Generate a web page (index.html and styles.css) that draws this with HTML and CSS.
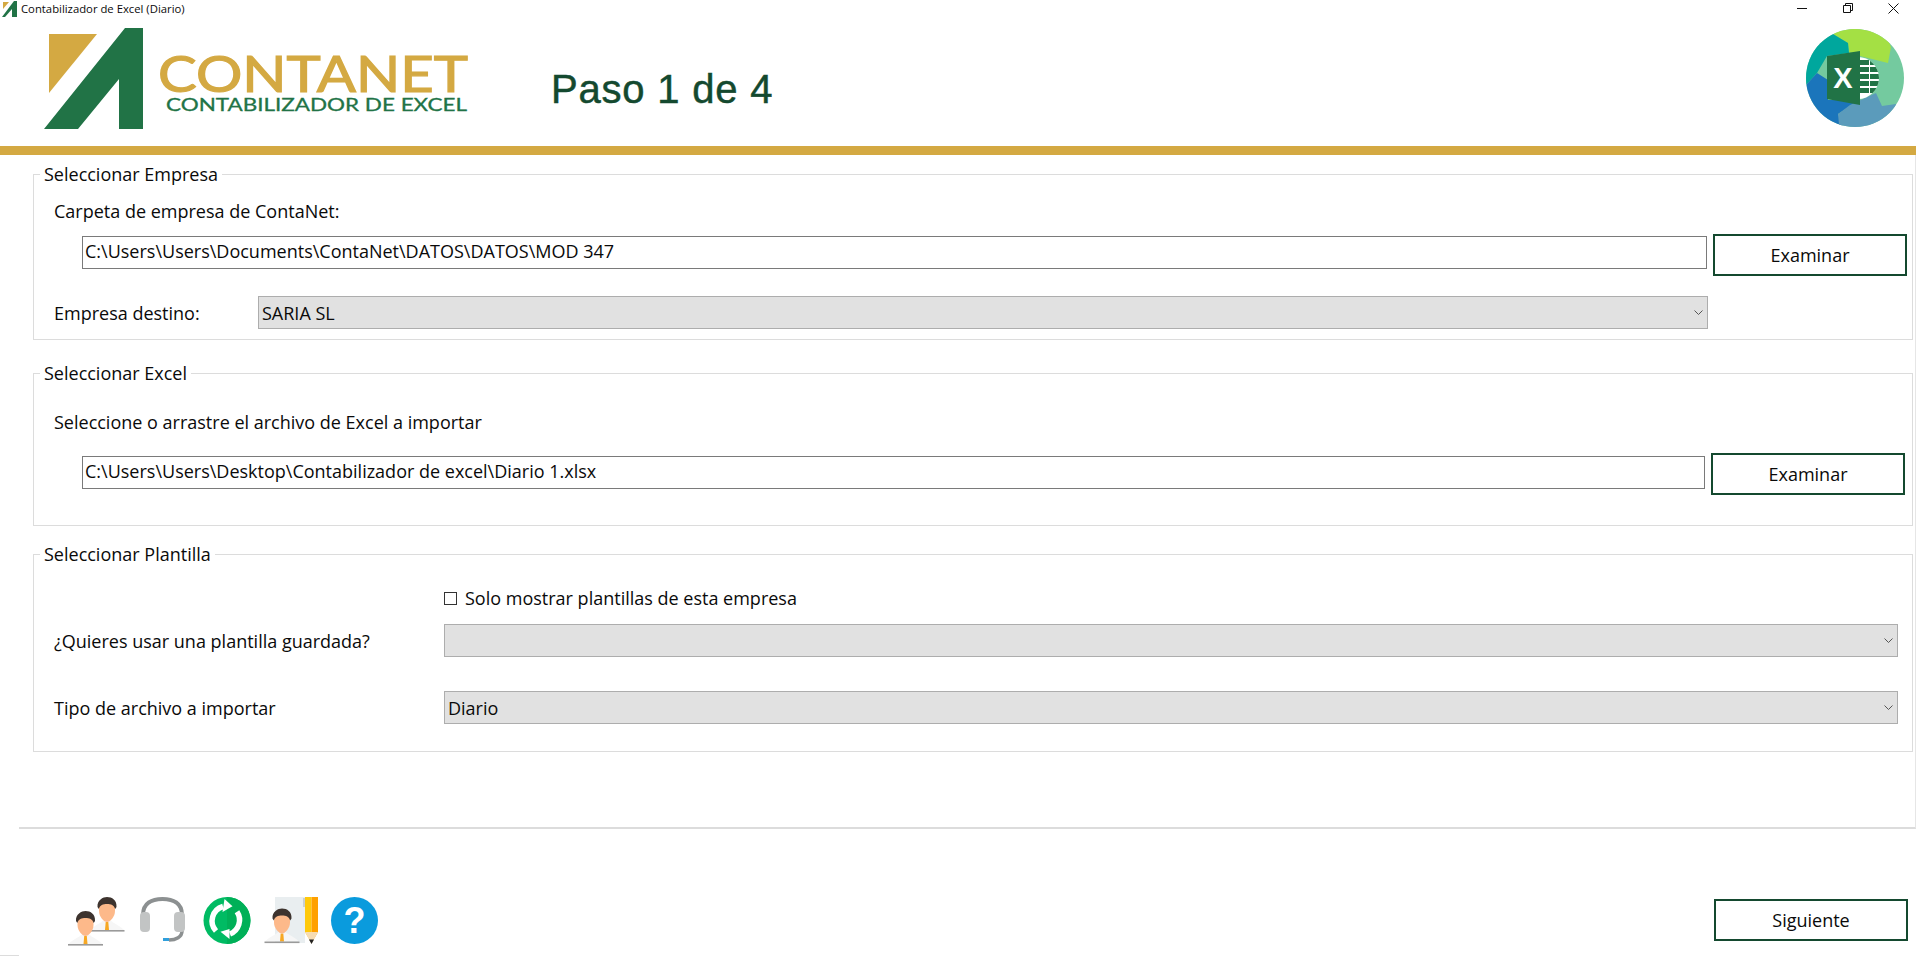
FILE: index.html
```html
<!DOCTYPE html>
<html lang="es">
<head>
<meta charset="utf-8">
<title>Contabilizador de Excel (Diario)</title>
<link rel="stylesheet" href="styles.css">
</head>
<body>
<svg class="defs" width="0" height="0" aria-hidden="true">
  <defs>
    <g id="person">
      <path d="M-17 33C-12 28-6 26-3 23L3 23C6 26 12 28 17 33Z" fill="#f6f6f6"/>
      <path d="M-1.300 25L1.300 25L2 33L-2 33Z" fill="#f7a823"/>
      <path d="M-8 8C-4 6 4 6 8 8L8 14C8 20 3 25 0 25C-3 25-8 20-8 14Z" fill="#fdb98a"/>
      <path d="M-9.500 10C-10 3-4 0 0 0C5 0 10 3 9.500 10L8.200 12C7 8 4 7 0 7C-4 7-7 8-8.200 12Z" fill="#3d332e"/>
      <rect x="-17.500" y="33" width="35" height="1.600" fill="#9a9a9a"/>
    </g>
    <clipPath id="disc"><circle cx="65" cy="58" r="49"/></clipPath>
    <clipPath id="hole"><circle cx="68" cy="58" r="21"/></clipPath>
  </defs>
</svg>

<div class="titlebar">
  <svg class="app-icon" width="15" height="16" viewBox="0 0 15 16">
    <path d="M1 1L7 1L1 8Z" fill="#d4a942"/>
    <path d="M0 16L3 16L10 8L10 16L15 16L15 0L12 0Z" fill="#217346"/>
  </svg>
  <span class="app-title">Contabilizador de Excel (Diario)</span>
  <div class="win-controls">
    <span class="win-btn"><svg width="10" height="10" viewBox="0 0 10 10"><path d="M0 5.500H10" stroke="#111" fill="none"/></svg></span>
    <span class="win-btn"><svg width="10" height="10" viewBox="0 0 10 10"><path d="M.5 2.500H7.500V9.500H.5ZM2.500 2.500V.5H9.500V7.500H7.500" stroke="#111" fill="none"/></svg></span>
    <span class="win-btn"><svg width="11" height="11" viewBox="0 0 11 11"><path d="M.5.5L10.500 10.500M10.500.5L.5 10.500" stroke="#111" fill="none"/></svg></span>
  </div>
</div>

<header class="header">
  <svg class="logo" width="440" height="126" viewBox="0 0 440 126">
    <path d="M9 14L57 14L9 73Z" fill="#d4a942"/>
    <path d="M4 109L38 109L79 59L79 109L103 109L103 8L85 8Z" fill="#217346"/>
    <text class="logo-main" x="118" y="72" textLength="310" lengthAdjust="spacingAndGlyphs">CONTANET</text>
    <text class="logo-sub" x="126" y="91" textLength="301" lengthAdjust="spacingAndGlyphs">CONTABILIZADOR DE EXCEL</text>
  </svg>
  <h1 class="step">Paso 1 de 4</h1>
  <svg class="excel" width="126" height="115" viewBox="0 0 126 115">
    <g clip-path="url(#disc)">
      <rect width="126" height="115" fill="#74ca9f"/>
      <path d="M43 14L58 23L59 32L70 36L98 43L101 27L90 0L50 0Z" fill="#a4e044"/>
      <path d="M43 14L58 23L59 33L37 36L27 53L16 65L0 60L10 10Z" fill="#00a79d"/>
      <path d="M16 65L27 53L38 60L38 80L70 80L48 94L53 107L30 115L5 90Z" fill="#1b75bb"/>
      <path d="M48 94L60 85L86 73L92 86L106 84L100 115L50 115Z" fill="#5b9bbb"/>
    </g>
    <circle cx="68" cy="58" r="21" fill="#fff"/>
    <g clip-path="url(#hole)" fill="#217346">
      <rect x="70" y="40" width="9" height="5"/><rect x="80" y="40" width="9" height="5"/>
      <rect x="70" y="47" width="9" height="5"/><rect x="80" y="47" width="9" height="5"/>
      <rect x="70" y="54" width="9" height="5"/><rect x="80" y="54" width="9" height="5"/>
      <rect x="70" y="61" width="9" height="5"/><rect x="80" y="61" width="9" height="5"/>
      <rect x="70" y="68" width="9" height="5"/><rect x="80" y="68" width="9" height="5"/>
    </g>
    <path d="M37 36L70 31L70 85L37 79Z" fill="#217346"/>
    <text class="excel-x" x="53" y="68">X</text>
  </svg>
</header>

<main class="panel">
  <fieldset class="group group-company">
    <legend class="group-title">Seleccionar Empresa</legend>
    <div class="label">Carpeta de empresa de ContaNet:</div>
    <div class="path-row">
      <div class="field field-company">C:\Users\Users\Documents\ContaNet\DATOS\DATOS\MOD 347</div>
      <div class="button">Examinar</div>
    </div>
    <div class="select-row">
      <div class="label label-target">Empresa destino:</div>
      <div class="select select-target"><span>SARIA SL</span><svg class="chevron" width="9" height="5" viewBox="0 0 9 5"><path d="M.5.5L4.500 4.500L8.500.5" stroke="#555" fill="none"/></svg></div>
    </div>
  </fieldset>

  <fieldset class="group group-excel">
    <legend class="group-title">Seleccionar Excel</legend>
    <div class="label">Seleccione o arrastre el archivo de Excel a importar</div>
    <div class="path-row path-row-excel">
      <div class="field field-excel">C:\Users\Users\Desktop\Contabilizador de excel\Diario 1.xlsx</div>
      <div class="button">Examinar</div>
    </div>
  </fieldset>

  <fieldset class="group group-template">
    <legend class="group-title">Seleccionar Plantilla</legend>
    <div class="check-row"><span class="checkbox"></span><span class="label">Solo mostrar plantillas de esta empresa</span></div>
    <div class="select-row select-row-first">
      <div class="label label-template">¿Quieres usar una plantilla guardada?</div>
      <div class="select select-template"><span></span><svg class="chevron" width="9" height="5" viewBox="0 0 9 5"><path d="M.5.5L4.500 4.500L8.500.5" stroke="#555" fill="none"/></svg></div>
    </div>
    <div class="select-row select-row-second">
      <div class="label label-template">Tipo de archivo a importar</div>
      <div class="select select-template"><span>Diario</span><svg class="chevron" width="9" height="5" viewBox="0 0 9 5"><path d="M.5.5L4.500 4.500L8.500.5" stroke="#555" fill="none"/></svg></div>
    </div>
  </fieldset>
</main>

<footer class="footer">
  <div class="tools">
    <svg width="64" height="49" viewBox="0 0 64 49"><use href="#person" x="39" y="0"/><use href="#person" x="17.500" y="14"/></svg>
    <svg width="63" height="49" viewBox="-8 0 63 49">
      <path d="M3 18C3 6 12 2 22.500 2C33 2 42 6 42 18" stroke="#8c9091" stroke-width="4" fill="none"/>
      <path d="M42 34C42 40 36 43 29 43" stroke="#8c9091" stroke-width="3.500" fill="none"/>
      <rect x="0" y="15" width="10" height="20" rx="4" fill="#c2c4c4"/>
      <rect x="34" y="15" width="11" height="20" rx="4" fill="#c2c4c4"/>
      <rect x="23" y="41" width="6" height="3" fill="#2f9fdc"/>
    </svg>
    <svg width="62" height="49" viewBox="0 0 62 49">
      <circle cx="32" cy="23.500" r="23.500" fill="#00bb63"/>
      <path d="M32 0A23.500 23.500 0 0 1 32 47Z" fill="#00b058"/>
      <path d="M21 34A15 15 0 0 1 28 9.500" stroke="#fff" stroke-width="5.500" fill="none"/>
      <path d="M29.500 2L37.500 9.300L27.500 15Z" fill="#fff"/>
      <path d="M42 14.700A15 15 0 0 1 35 37" stroke="#fff" stroke-width="5.500" fill="none"/>
      <path d="M34.500 32L25.500 34.700L34.500 42Z" fill="#fff"/>
    </svg>
    <svg width="68" height="49" viewBox="-6 0 68 49">
      <path d="M12 0H42V46H12Z" fill="#e9eef0"/>
      <rect x="40" y="1" width="2" height="9" fill="#c9cfd1"/>
      <path d="M42 0H48.500V46L42 35Z" fill="#ffc90a"/>
      <path d="M48.500 0H55V35L48.500 46Z" fill="#ffa000"/>
      <path d="M42 35H55L48.500 47Z" fill="#f6dcb4"/>
      <path d="M46 42.500H51L48.500 47Z" fill="#222"/>
      <use href="#person" x="19" y="11.500"/>
    </svg>
    <svg width="60" height="49" viewBox="0 0 60 49">
      <circle cx="29.500" cy="23.500" r="23.500" fill="#0a9bdd"/>
      <text class="help-mark" x="29.500" y="36">?</text>
    </svg>
  </div>
  <div class="button button-next">Siguiente</div>
</footer>
<div class="tick"></div>
</body>
</html>
```

FILE: styles.css
```css
* { box-sizing: border-box; }

html, body {
  margin: 0;
  height: 100%;
  background: #fff;
  overflow: hidden;
}

body {
  font-family: "Open Sans", "Noto Sans", sans-serif;
  font-size: 18px;
  line-height: 24px;
  color: #0a0a0a;
}

.defs { display: block; height: 0; }

.titlebar {
  display: flex;
  align-items: flex-start;
  height: 20px;
}

.app-icon { margin: 1px 0 0 2px; }

.app-title {
  margin-left: 4px;
  font-size: 11.3px;
  line-height: 18px;
}

.win-controls { display: flex; margin-left: auto; }

.win-btn {
  display: flex;
  justify-content: center;
  width: 45.5px;
  padding-top: 3px;
  line-height: 0;
}

.header {
  display: flex;
  align-items: flex-start;
  height: 135px;
  padding-left: 40px;
  border-bottom: 9px solid #d4a942;
}

.logo-main {
  font-family: Lato, sans-serif;
  font-size: 50px;
  font-weight: 400;
  fill: #d4a942;
  stroke: #d4a942;
  stroke-width: 1.2px;
}

.logo-sub {
  font-family: Lato, sans-serif;
  font-size: 18px;
  font-weight: 400;
  fill: #217346;
  stroke: #217346;
  stroke-width: 0.3px;
}

.step {
  margin: 45px 0 0 71px;
  font-family: "Liberation Sans", sans-serif;
  font-size: 40px;
  line-height: 48px;
  font-weight: 400;
  letter-spacing: 0.8px;
  -webkit-text-stroke: 0.5px #14492f;
  color: #14492f;
}

.excel { margin-left: auto; display: block; }

.excel-x {
  font-family: "Liberation Sans", sans-serif;
  font-size: 29px;
  font-weight: 700;
  text-anchor: middle;
  fill: #fff;
}

.panel {
  height: 674px;
  margin-left: 19px;
  padding: 7px 0 0 14px;
  border-right: 1px solid #e6e6e6;
  border-bottom: 2px solid #dcdcdc;
}

.group {
  width: 1880px;
  margin: 0;
  padding: 0 5px 0 20px;
  border: 1px solid #dcdcdc;
  min-width: 0;
}

.group-company { padding-top: 13px; padding-bottom: 10px; }
.group-excel { margin-top: 21px; padding-top: 25px; padding-bottom: 30px; }
.group-template { margin-top: 16px; padding-top: 20px; padding-bottom: 27px; }

.group-title {
  margin-left: -14px;
  padding: 0 4px;
  line-height: 24px;
}

.path-row {
  display: flex;
  align-items: flex-start;
  margin: 11px 0 0 28px;
}

.path-row-excel { margin-top: 19px; }

.field {
  height: 33px;
  margin-top: 2px;
  padding: 0 2px;
  border: 1px solid #7a7a7a;
  line-height: 28px;
  white-space: nowrap;
}

.field-company { width: 1625px; margin-right: 6px; }
.field-excel { width: 1623px; margin-top: 3px; margin-right: 6px; }

.button {
  display: flex;
  align-items: center;
  justify-content: center;
  width: 194px;
  height: 42px;
  border: 2px solid #14492f;
}

.select-row {
  display: flex;
  align-items: center;
  margin-top: 20px;
}

.select-row-first { margin-top: 14px; }
.select-row-second { margin-top: 34px; }

.label-target { width: 204px; }
.label-template { width: 390px; margin-top: 1px; }

.select {
  display: flex;
  align-items: center;
  justify-content: space-between;
  height: 33px;
  padding: 0 4px 0 3px;
  background: #e1e1e1;
  border: 1px solid #adadad;
}

.select-target { width: 1450px; }
.select-template { width: 1454px; }

.chevron { display: block; flex: none; }

.check-row {
  display: flex;
  align-items: center;
  height: 24px;
  margin-left: 390px;
}

.checkbox {
  width: 13px;
  height: 13px;
  margin-right: 8px;
  border: 1px solid #333;
}

.footer {
  display: flex;
  align-items: flex-start;
  justify-content: space-between;
  height: 126px;
  padding: 68px 8px 0 68px;
}

.tools { display: flex; }
.tools svg { display: block; }

.help-mark {
  font-family: "Liberation Sans", sans-serif;
  font-size: 36px;
  font-weight: 700;
  text-anchor: middle;
  fill: #fff;
}

.button-next { margin-top: 2px; }

.tick {
  width: 19px;
  height: 1px;
  background: #dcdcdc;
}
```
